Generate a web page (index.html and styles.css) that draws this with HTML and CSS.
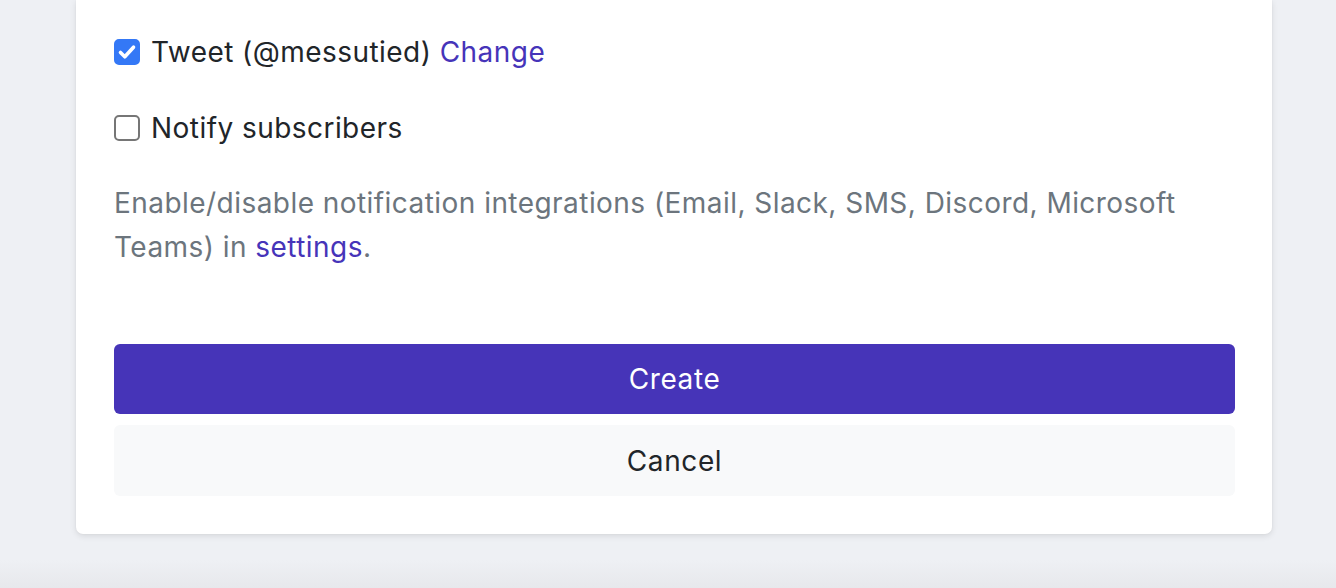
FILE: index.html
```html
<!DOCTYPE html>
<html lang="en">
<head>
<meta charset="utf-8">
<title>Create</title>
<link rel="stylesheet" href="styles.css">
</head>
<body>
<div class="page">
  <div class="card">
    <label class="check first">
      <span class="box checked">
        <svg viewBox="0 0 26 26" width="26" height="26"><path d="M6.5 13.5l4.3 4.3 8.7-9.6" fill="none" stroke="#fff" stroke-width="3.6" stroke-linecap="round" stroke-linejoin="round"/></svg>
      </span>
      <span class="label">Tweet (@messutied) <a href="#" class="link">Change</a></span>
    </label>
    <label class="check second">
      <span class="box"></span>
      <span class="label">Notify subscribers</span>
    </label>
    <p class="help">Enable/disable notification integrations (Email, Slack, SMS, Discord, Microsoft Teams) in <a href="#" class="link">settings</a>.</p>
    <div class="actions">
      <button class="btn primary">Create</button>
      <button class="btn secondary">Cancel</button>
    </div>
  </div>
</div>
</body>
</html>
```
FILE: styles.css
```css
html, body {
  margin: 0;
  padding: 0;
}
body {
  background: linear-gradient(to bottom, #eef0f4 0, #eef0f4 560px, #e7e8ec 588px);
  min-height: 588px;
  font-family: Inter, "Noto Sans", "Liberation Sans", sans-serif;
  color: #212529;
  overflow: hidden;
}
.page {
  padding-left: 76px;
}
.card {
  width: 1196px;
  box-sizing: border-box;
  background: #fff;
  border-radius: 0 0 7px 7px;
  box-shadow: 0 2px 6px rgba(0, 0, 0, 0.10), 0 0 2px rgba(0, 0, 0, 0.06);
  padding: 30px 37px 38px 38px;
}
.check {
  display: flex;
  align-items: center;
  height: 44px;
  font-size: 28px;
  line-height: 44px;
  cursor: pointer;
}
.second {
  margin-top: 32px;
}
.box {
  width: 26px;
  height: 26px;
  box-sizing: border-box;
  border: 2px solid #767676;
  border-radius: 5px;
  background: #fff;
  margin-right: 11px;
  flex: none;
  display: flex;
}
.box.checked {
  background: #3478f6;
  border-color: #3478f6;
}
.box.checked svg {
  margin: -2px;
}
.label {
  color: #212529;
  letter-spacing: 0.45px;
}
.link {
  color: #4634b9;
  text-decoration: none;
}
.help {
  margin: 31px 0 0;
  font-size: 28px;
  line-height: 44px;
  color: #6c757d;
  letter-spacing: 0.45px;
}
.actions {
  margin-top: 75px;
  display: flex;
  flex-direction: column;
  gap: 11px;
}
.btn {
  display: block;
  width: 100%;
  border: none;
  border-radius: 6px;
  font-family: inherit;
  font-size: 28px;
  letter-spacing: 0.6px;
  padding: 0;
  cursor: pointer;
}
.primary {
  height: 70px;
  background: #4634b8;
  color: #fff;
}
.secondary {
  height: 71px;
  background: #f8f9fa;
  color: #212529;
}
```
